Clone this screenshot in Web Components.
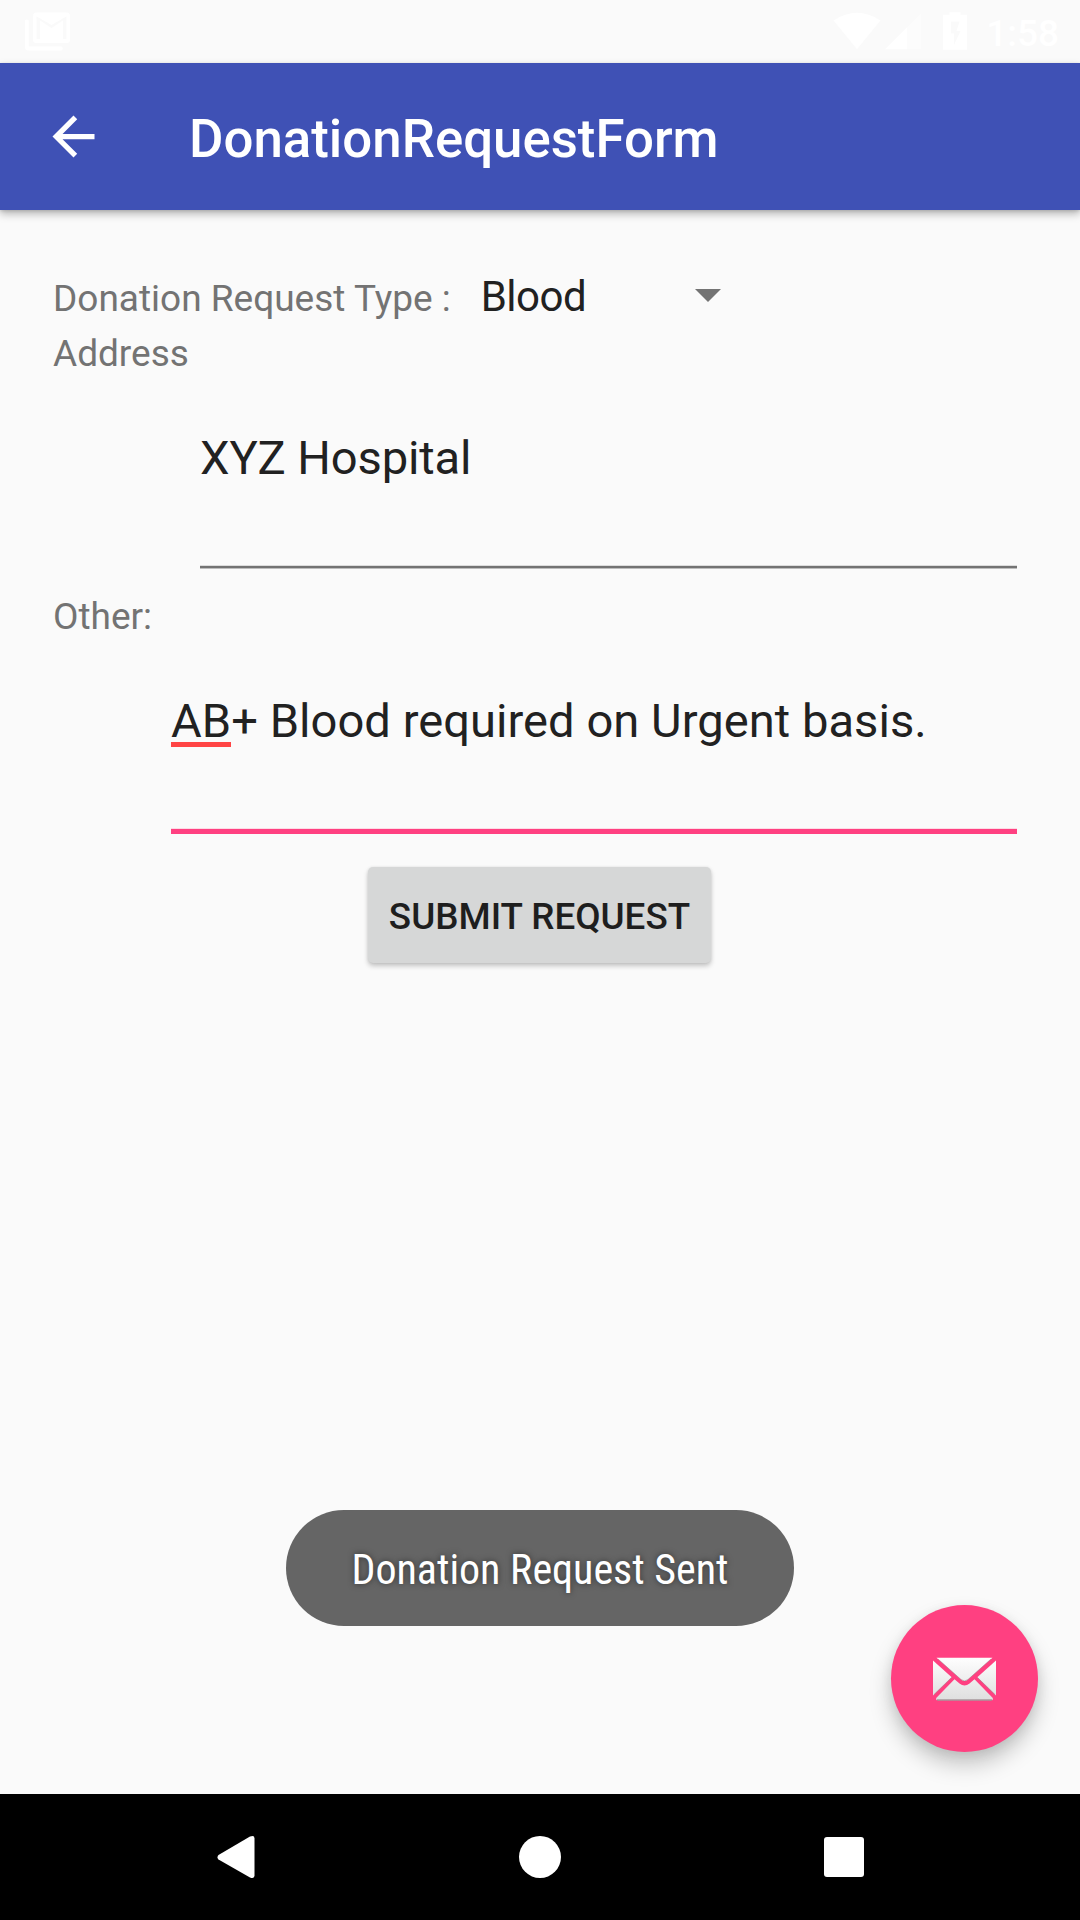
<!DOCTYPE html>
<html lang="en">
<head>
<meta charset="utf-8">
<title>DonationRequestForm</title>
<style>
html,body{margin:0;height:100%;background:#fafafa;overflow:hidden}
body{font-family:Roboto,"Noto Sans",sans-serif}
</style>
</head>
<body>
<donation-screen></donation-screen>
<script>
const define=(name,html)=>{
  const t=document.createElement('template');
  t.innerHTML=html;
  customElements.define(name,class extends HTMLElement{
    constructor(){super();this.attachShadow({mode:'open'}).appendChild(t.content.cloneNode(true));}
  });
};

define('status-bar',`
<style>
:host{display:flex;height:63px;box-sizing:border-box;padding:0 21px 0 24px;justify-content:space-between;color:#fff}
svg{display:block;fill:#fff;flex:none}
.right{display:flex}
.clock{font-size:37px;font-weight:500;line-height:43px;padding-top:12px;margin-left:16px;width:74px;display:flex;justify-content:flex-end}
</style>
<svg width="48" height="63" viewBox="24 0 48 63">
  <path fill-rule="evenodd" d="M36.5 12.5H66.5Q70 12.5 70 16V39.500Q70 43 66.500 43H36.500Q33 43 33 39.500V16Q33 12.500 36.500 12.500ZM36.500 16.500V39H40V20.500L51.500 28L63 20.500V39H66.500V16.500L51.500 25Z"/>
  <path d="M25 20.500Q27 18.500 28.700 20.500V46.500H61.500Q64 48.500 61.500 50.500H28.500Q25 50.500 25 47Z"/>
</svg>
<div class="right">
<svg width="136" height="63" viewBox="833 0 136 63">
  <path d="M857 49.300L833.500 20.500Q857 5 880.500 20.500Z"/>
  <path d="M885 49.300H907V27.300Z"/>
  <path opacity=".4" d="M907 27.300L921 13.300V49.300H907Z"/>
  <path fill-rule="evenodd" d="M949.500 12.300H960.500V14.700H967V49.700H943V14.700H949.500ZM951 21.500V33.500H954V45L960.500 31H956.500L959.500 21.500Z"/>
</svg>
<span class="clock"><slot></slot></span>
</div>`);

define('app-bar',`
<style>
:host{display:flex;height:147px;align-items:center;background:#3f51b5;color:#fff;position:relative;box-shadow:0 4px 8px rgba(0,0,0,.27),0 1px 3px rgba(0,0,0,.12)}
svg{width:63px;height:63px;margin:0 84px 0 42px;fill:#fff;flex:none}
.t{font-size:52.8px;font-weight:500;line-height:62px;padding-top:5px;white-space:nowrap}
</style>
<svg viewBox="0 0 24 24"><path d="M20 11H7.830l5.590-5.590L12 4l-8 8 8 8 1.410-1.410L7.830 13H20v-2z"/></svg>
<div class="t"><slot></slot></div>`);

define('form-label',`
<style>:host{display:block;font-size:37px;line-height:43px;color:#737373;white-space:nowrap}</style><slot></slot>`);

define('drop-down',`
<style>
:host{display:flex;width:240px;justify-content:space-between;align-items:center;font-size:42px;line-height:49px;color:#212121;letter-spacing:-.5px}
svg{display:block;fill:#737373;position:relative;top:-1px}
</style>
<span><slot></slot></span>
<svg width="26" height="13" viewBox="0 0 26 13"><path d="M0 0H26L13 13Z"/></svg>`);

define('text-field',`
<style>
:host{display:flex;flex-direction:column;justify-content:space-between;height:139px;font-size:47.1px;line-height:55px;color:#212121;white-space:nowrap;letter-spacing:-.12px}
.line{height:2px;background:#737373;border-top:1px solid #dcdcdc;border-bottom:1px solid #bdbdbd}
:host([focused]){height:141px;letter-spacing:.04px}
:host([focused]) .line{height:5px;background:#ff4081;border-top:1px solid #fcdbe5;border-bottom:0}
::slotted(u){text-decoration:none;background:linear-gradient(#ff4444,#ff4444) 0 49px/100% 5px no-repeat}
</style>
<div class="text"><slot></slot></div><div class="line"></div>`);

define('raised-button',`
<style>
:host{display:flex;width:343px;height:96px;align-items:center;justify-content:center;background:#d6d7d7;border-radius:5px;color:#1e1e1e;font-size:36.8px;font-weight:500;line-height:43px;white-space:nowrap;box-shadow:0 3px 5px rgba(0,0,0,.22),0 0 3px rgba(0,0,0,.08)}
span{padding-top:3px}
</style><span><slot></slot></span>`);

define('toast-message',`
<style>
:host{display:flex;width:508px;height:116px;align-items:center;justify-content:center;border-radius:58px;background:#656565;color:#fff;font-size:42px;line-height:49px;white-space:nowrap;text-shadow:0 0 6px rgba(0,0,0,.5)}
span{display:block;padding:3px 0 0;font-family:"Roboto Condensed",Roboto,sans-serif;font-stretch:condensed}
</style><span><slot></slot></span>`);

define('mail-fab',`
<style>
:host{display:flex;width:147px;height:147px;border-radius:50%;background:#ff4081;align-items:center;justify-content:center;box-shadow:0 13px 22px rgba(0,0,0,.21),0 3px 12px rgba(0,0,0,.08)}
svg{display:block}
</style>
<svg width="63" height="44" viewBox="0 0 63 44">
  <defs><linearGradient id="g" x1="0" y1="0" x2="0" y2="44" gradientUnits="userSpaceOnUse"><stop offset="0" stop-color="#fff"/><stop offset="1" stop-color="#dedede"/></linearGradient></defs>
  <g fill="url(#g)">
    <path d="M3.500 .7H59.500L35 22.500Q31.500 25.500 28 22.500Z"/>
    <path d="M0 3.500L18.700 20.300L0 38.500Z"/>
    <path d="M63 3.500L44.300 20.300L63 38.500Z"/>
    <path d="M21.500 22.300L26.500 26.500Q31.500 30.500 36.500 26.500L41.500 22.300L59.800 41Q60.300 43.500 58 43.500H5Q2.700 43.500 3.200 41Z"/>
  </g>
  <g fill="none" stroke="#8b7379" stroke-opacity=".45">
    <path d="M5 2L28 22.500Q31.500 25.500 35 22.500L58 2"/>
    <path d="M1 37.500L18.700 20.300M62 37.500L44.300 20.300"/>
    <path d="M4 43H59" stroke-width="1.500" stroke-opacity=".65"/>
  </g>
</svg>`);

define('nav-bar',`
<style>
:host{display:flex;height:126px;background:#000;align-items:center;justify-content:space-between;box-sizing:border-box;padding:0 215px}
svg{display:block;fill:#fff}
</style>
<svg width="42" height="44" viewBox="215 1835 42 44"><path d="M218.500 1855L250 1836.600Q254.500 1834.800 254.500 1838.500V1875.500Q254.500 1879.200 250 1877.400L218.500 1859.500Q216.500 1857.200 218.500 1855Z"/></svg>
<svg width="42" height="42"><circle cx="21" cy="21" r="21"/></svg>
<svg width="42" height="42"><rect x="1" y="1" width="40" height="40" rx="3"/></svg>`);

define('donation-screen',`
<style>
:host{display:flex;flex-direction:column;width:1080px;height:1920px;position:relative;background:#fafafa}
main{flex:1;display:flex;flex-direction:column;padding:62px 63px 0 53px}
.row{display:flex;align-items:baseline;height:60px;gap:30px}
.address{margin:0 0 0 147px}
.other{margin:0 0 0 118px}
.gap{height:55px}
.gap.small{height:26px}
raised-button{margin:33px 0 0 315px}
toast-message{position:absolute;left:286px;top:1510px}
mail-fab{position:absolute;left:891px;top:1605px}
</style>
<status-bar>1:58</status-bar>
<app-bar>DonationRequestForm</app-bar>
<main>
  <div class="row"><form-label>Donation Request Type :</form-label><drop-down>Blood</drop-down></div>
  <form-label>Address</form-label>
  <div class="gap"></div>
  <text-field class="address">XYZ Hospital</text-field>
  <div class="gap small"></div>
  <form-label>Other:</form-label>
  <div class="gap"></div>
  <text-field class="other" focused><u>AB</u>+ Blood required on Urgent basis.</text-field>
  <raised-button>SUBMIT REQUEST</raised-button>
</main>
<nav-bar></nav-bar>
<toast-message>Donation Request Sent</toast-message>
<mail-fab></mail-fab>`);
</script>
</body>
</html>
